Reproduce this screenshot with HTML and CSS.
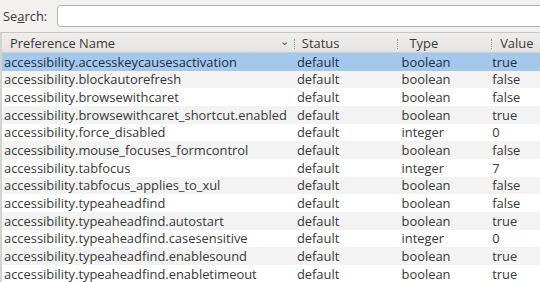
FILE: index.html
```html
<!DOCTYPE html>
<html lang="en">
<head>
  <meta charset="UTF-8">
  <title>about:config</title>
  <link rel="stylesheet" href="styles.css">
</head>
<body>
  <div class="searchBar">
    <label class="searchLabel" for="search">Se<u>a</u>rch:</label>
    <input class="searchInput" id="search" type="text">
  </div>
  <div class="prefs">
    <div class="head">
      <div class="col name">Preference Name <span class="sortArrow">&#8964;</span></div>
      <div class="col status"><i class="sep"></i>Status</div>
      <div class="col type"><i class="sep"></i>Type</div>
      <div class="col value"><i class="sep"></i>Value</div>
    </div>
    <div class="row current">
      <div class="col name">accessibility.accesskeycausesactivation</div>
      <div class="col status">default</div><div class="col type">boolean</div><div class="col value">true</div>
    </div>
    <div class="row">
      <div class="col name">accessibility.blockautorefresh</div>
      <div class="col status">default</div><div class="col type">boolean</div><div class="col value">false</div>
    </div>
    <div class="row">
      <div class="col name">accessibility.browsewithcaret</div>
      <div class="col status">default</div><div class="col type">boolean</div><div class="col value">false</div>
    </div>
    <div class="row">
      <div class="col name">accessibility.browsewithcaret_shortcut.enabled</div>
      <div class="col status">default</div><div class="col type">boolean</div><div class="col value">true</div>
    </div>
    <div class="row">
      <div class="col name">accessibility.force_disabled</div>
      <div class="col status">default</div><div class="col type">integer</div><div class="col value">0</div>
    </div>
    <div class="row">
      <div class="col name">accessibility.mouse_focuses_formcontrol</div>
      <div class="col status">default</div><div class="col type">boolean</div><div class="col value">false</div>
    </div>
    <div class="row">
      <div class="col name">accessibility.tabfocus</div>
      <div class="col status">default</div><div class="col type">integer</div><div class="col value">7</div>
    </div>
    <div class="row">
      <div class="col name">accessibility.tabfocus_applies_to_xul</div>
      <div class="col status">default</div><div class="col type">boolean</div><div class="col value">false</div>
    </div>
    <div class="row">
      <div class="col name">accessibility.typeaheadfind</div>
      <div class="col status">default</div><div class="col type">boolean</div><div class="col value">false</div>
    </div>
    <div class="row">
      <div class="col name">accessibility.typeaheadfind.autostart</div>
      <div class="col status">default</div><div class="col type">boolean</div><div class="col value">true</div>
    </div>
    <div class="row">
      <div class="col name">accessibility.typeaheadfind.casesensitive</div>
      <div class="col status">default</div><div class="col type">integer</div><div class="col value">0</div>
    </div>
    <div class="row">
      <div class="col name">accessibility.typeaheadfind.enablesound</div>
      <div class="col status">default</div><div class="col type">boolean</div><div class="col value">true</div>
    </div>
    <div class="row">
      <div class="col name">accessibility.typeaheadfind.enabletimeout</div>
      <div class="col status">default</div><div class="col type">boolean</div><div class="col value">true</div>
    </div>
  </div>
</body>
</html>
```

FILE: styles.css
```css
* {
  margin: 0;
  padding: 0;
  box-sizing: border-box;
}
body {
  background: #f2f1f0;
  font-family: "Open Sans", "Liberation Sans", sans-serif;
  font-size: 12.9px;
  color: #383838;
  overflow: hidden;
}
.searchBar {
  display: flex;
  align-items: center;
  height: 32px;
}
.searchLabel {
  width: 57px;
  padding-left: 3px;
}
.searchInput {
  flex: 1;
  height: 22px;
  margin-right: -10px;
  border: 1px solid #b5b3b0;
  border-radius: 3px;
  background: #fff;
}
.prefs {
  border-top: 1px solid #c9c7c4;
  border-left: 2px solid #d5d3d0;
  background: #fff;
}
.head,
.row {
  display: flex;
  white-space: nowrap;
}
.head {
  height: 20px;
  align-items: center;
  background: linear-gradient(#efeeed, #e4e3e1);
  border-bottom: 1px solid #cfcdca;
}
.row {
  height: 17.67px;
  align-items: center;
}
.row:nth-child(odd) {
  background: #f3f3f3;
}
.row.current {
  background: #a3c8ec;
  color: #1e2f40;
}
.col {
  overflow: hidden;
}
.name {
  width: 292px;
  padding-left: 2px;
}
.status {
  width: 104px;
  padding-left: 4px;
}
.type {
  width: 94px;
  padding-left: 5px;
}
.value {
  width: 50px;
  padding-left: 2px;
}
.head .col {
  position: relative;
  display: flex;
  align-items: center;
}
.head .name {
  padding-left: 8px;
}
.head .status {
  padding-left: 9px;
}
.head .type {
  padding-left: 13px;
}
.head .value {
  padding-left: 10px;
}
.sortArrow {
  margin-left: auto;
  margin-right: 4px;
  font-size: 11px;
  line-height: 8px;
  margin-top: -4px;
  color: #555;
}
.sep {
  position: absolute;
  left: 1px;
  top: 5px;
  height: 10px;
  border-left: 1px dotted #9a9896;
}
```
